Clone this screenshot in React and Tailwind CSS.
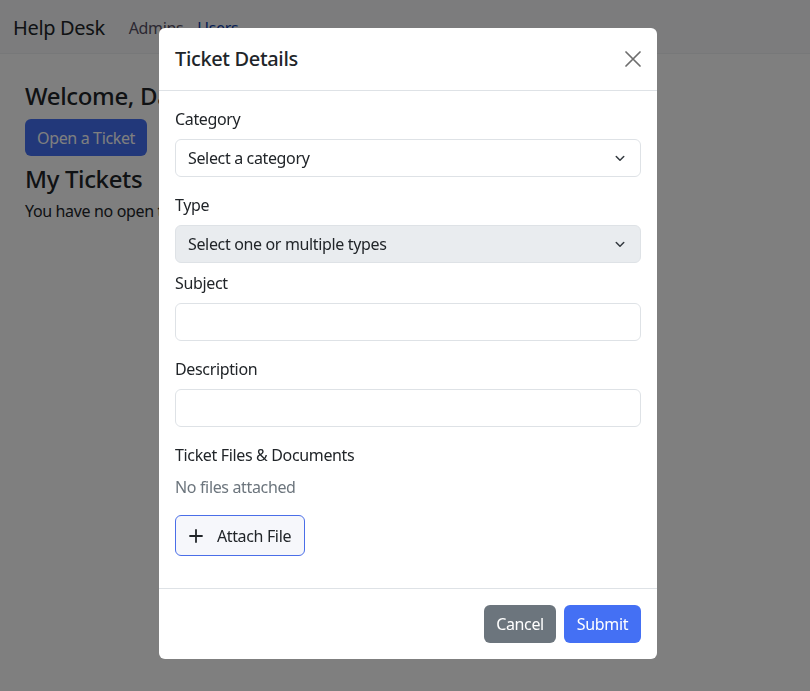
const Chevron = () => (
  <svg width="16" height="12" viewBox="0 0 16 16" fill="none" className="shrink-0">
    <path d="M3 6l5 5 5-5" stroke="#343a40" strokeWidth="2" strokeLinecap="round" strokeLinejoin="round" />
  </svg>
);

const Field = ({ label, children, last }) => (
  <div className={last ? 'mb-2' : 'mb-4'}>
    <label className="block mb-2 leading-6">{label}</label>
    {children}
  </div>
);

export default function App() {
  return (
    <div className="min-h-[691px] bg-white text-[#212529] text-base tracking-[-0.35px]" style={{ fontFamily: '"Noto Sans", "Open Sans", sans-serif' }}>
      {/* page behind the modal */}
      <nav className="h-[54px] bg-[#f8f9fa] flex items-center pl-[13px] pt-[2px] border-b border-[#eef0f2]">
        <span className="text-[20px] mr-[24px]">Help Desk</span>
        <span className="text-[#595166] mr-[14px]">Admins</span>
        <span className="text-[#0d3ea8]">Users</span>
      </nav>
      <main className="px-[25px] pt-[28px]">
        <h1 className="text-[24px] font-medium leading-7 mb-[9px]">Welcome, Dana</h1>
        <button className="h-[37px] px-3 rounded-md bg-[#4470f4] text-white">Open a Ticket</button>
        <h2 className="text-[24px] font-medium leading-7 mt-[9px] mb-[6px]">My Tickets</h2>
        <p>You have no open tickets.</p>
      </main>

      {/* modal */}
      <div className="fixed inset-0 bg-black/50 flex justify-center pl-[6px] pt-[28px]">
        <div className="w-[498px] h-[631px] bg-white rounded-[6px] flex flex-col">
          <div className="h-[63px] px-4 flex items-center justify-between border-b border-[#dee2e6]">
            <h5 className="text-[20px] font-medium">Ticket Details</h5>
            <button className="w-8 h-8 flex items-center justify-center -mr-2">
              <svg width="16" height="16" viewBox="0 0 16 16">
                <path d="M1 1l14 14M15 1L1 15" stroke="#6e6e6e" strokeWidth="1.7" strokeLinecap="round" />
              </svg>
            </button>
          </div>

          <div className="flex-1 p-4">
            <Field label="Category">
              <div className="h-[38px] rounded-md border border-[#dee2e6] flex items-center justify-between pl-3 pr-3">
                <span>Select a category</span>
                <Chevron />
              </div>
            </Field>
            <Field label="Type" last>
              <div className="h-[38px] rounded-md border border-[#dee2e6] bg-[#e9ecef] flex items-center justify-between pl-3 pr-3">
                <span>Select one or multiple types</span>
                <Chevron />
              </div>
            </Field>
            <Field label="Subject">
              <div className="h-[38px] rounded-md border border-[#dee2e6]" />
            </Field>
            <Field label="Description">
              <div className="h-[38px] rounded-md border border-[#dee2e6]" />
            </Field>
            <div>
              <label className="block mb-2 leading-6">Ticket Files &amp; Documents</label>
              <p className="text-[#6c757d] leading-6 mb-4">No files attached</p>
              <button className="h-[41px] w-[130px] rounded-md border border-[#4a6ee8] bg-[#f6f7fb] flex items-center justify-center gap-[14px]">
                <svg width="14" height="14" viewBox="0 0 14 14">
                  <path d="M7 1v12M1 7h12" stroke="#212529" strokeWidth="1.8" strokeLinecap="round" />
                </svg>
                <span>Attach File</span>
              </button>
            </div>
          </div>

          <div className="h-[71px] border-t border-[#dee2e6] flex items-center justify-end gap-2 px-4">
            <button className="h-[38px] w-[72px] rounded-md bg-[#6c757d] text-white">Cancel</button>
            <button className="h-[38px] w-[77px] rounded-md bg-[#4470f4] text-white">Submit</button>
          </div>
        </div>
      </div>
    </div>
  );
}
